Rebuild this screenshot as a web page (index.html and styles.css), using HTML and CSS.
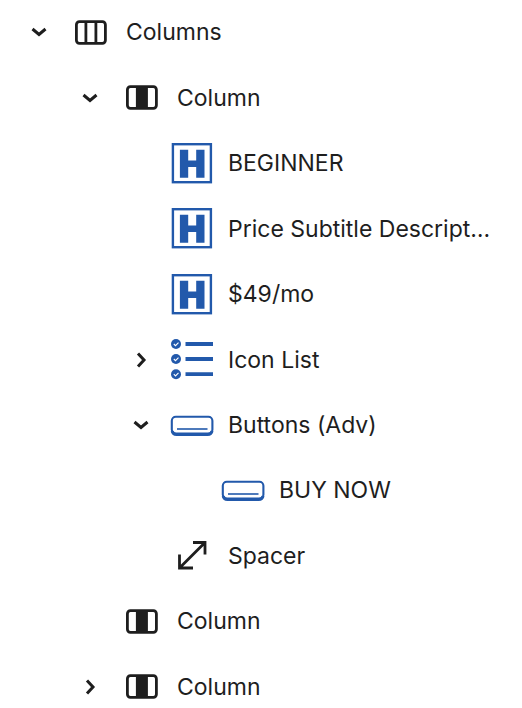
FILE: index.html
```html
<!DOCTYPE html>
<html lang="en">
<head>
<meta charset="utf-8">
<title>List view</title>
<link rel="stylesheet" href="styles.css">
</head>
<body>
<svg class="defs" width="0" height="0" aria-hidden="true">
  <defs>
    <symbol id="chev-down" viewBox="0 0 24 24"><path class="chev" d="M5.500 9l6.500 5.500L18.500 9"/></symbol>
    <symbol id="chev-right" viewBox="0 0 24 24"><path class="chev" d="M9 5.500l6 6.500-6 6.500"/></symbol>
    <symbol id="i-columns" viewBox="0 0 47 47">
      <rect class="dark-line" x="10.400" y="12.700" width="29" height="21.600" rx="3"/>
      <path class="dark-line" d="M19.900 12.700v21.600M29.900 12.700v21.600"/>
    </symbol>
    <symbol id="i-column" viewBox="0 0 47 47">
      <rect class="dark-line" x="10.400" y="12.700" width="29" height="21.600" rx="3"/>
      <rect class="dark-fill" x="18.900" y="12.700" width="12" height="21.600"/>
    </symbol>
    <symbol id="i-heading" viewBox="0 0 47 47">
      <rect class="blue-line" x="4.900" y="4.200" width="38" height="38"/>
      <path class="blue-fill" d="M11.900 9.700h8.300v10.800h8v-10.800h8.300v28h-8.300v-10.800h-8v10.800h-8.300z"/>
    </symbol>
    <symbol id="i-list" viewBox="0 0 47 47">
      <circle class="blue-fill" cx="8" cy="8" r="5"/>
      <circle class="blue-fill" cx="8" cy="23" r="5"/>
      <circle class="blue-fill" cx="8" cy="38.200" r="5"/>
      <path class="check" d="M5.800 8l1.700 1.700 3-3M5.800 23l1.700 1.700 3-3M5.800 38.200l1.700 1.700 3-3"/>
      <path class="bar" d="M17.500 8h27.500M17.500 23h27.500M17.500 38.200h27.500"/>
    </symbol>
    <symbol id="i-button" viewBox="0 0 47 47">
      <rect class="btn-frame" x="3.800" y="14.800" width="40.600" height="16.700" rx="4"/>
      <path class="btn-base" d="M4.200 29c.5 3 2.300 3.500 4.300 3.500h31.200c2 0 3.800-.5 4.300-3.500"/>
      <path class="btn-line" d="M9 27h30.500"/>
    </symbol>
    <symbol id="i-spacer" viewBox="0 0 47 47">
      <path class="dark-line" d="M12 35.500L36.500 11M25 10.500h12v12M11.500 22.500v13.500h13.500"/>
    </symbol>
  </defs>
</svg>
<ul class="tree">
  <li class="row level-0">
    <svg class="toggle"><use href="#chev-down"/></svg>
    <svg class="icon"><use href="#i-columns"/></svg>
    <span class="label">Columns</span>
  </li>
  <li class="row level-1">
    <svg class="toggle"><use href="#chev-down"/></svg>
    <svg class="icon"><use href="#i-column"/></svg>
    <span class="label">Column</span>
  </li>
  <li class="row level-2">
    <span class="toggle"></span>
    <svg class="icon"><use href="#i-heading"/></svg>
    <span class="label">BEGINNER</span>
  </li>
  <li class="row level-2">
    <span class="toggle"></span>
    <svg class="icon"><use href="#i-heading"/></svg>
    <span class="label">Price Subtitle Descript…</span>
  </li>
  <li class="row level-2">
    <span class="toggle"></span>
    <svg class="icon"><use href="#i-heading"/></svg>
    <span class="label">$49/mo</span>
  </li>
  <li class="row level-2">
    <svg class="toggle"><use href="#chev-right"/></svg>
    <svg class="icon"><use href="#i-list"/></svg>
    <span class="label">Icon List</span>
  </li>
  <li class="row level-2">
    <svg class="toggle"><use href="#chev-down"/></svg>
    <svg class="icon"><use href="#i-button"/></svg>
    <span class="label">Buttons (Adv)</span>
  </li>
  <li class="row level-3">
    <span class="toggle"></span>
    <svg class="icon"><use href="#i-button"/></svg>
    <span class="label">BUY NOW</span>
  </li>
  <li class="row level-2">
    <span class="toggle"></span>
    <svg class="icon"><use href="#i-spacer"/></svg>
    <span class="label">Spacer</span>
  </li>
  <li class="row level-1">
    <span class="toggle"></span>
    <svg class="icon"><use href="#i-column"/></svg>
    <span class="label">Column</span>
  </li>
  <li class="row level-1">
    <svg class="toggle"><use href="#chev-right"/></svg>
    <svg class="icon"><use href="#i-column"/></svg>
    <span class="label">Column</span>
  </li>
</ul>
</body>
</html>
```
FILE: styles.css
```css
html, body {
  margin: 0;
  height: 708px;
  overflow: hidden;
  background: #fff;
}
.defs {
  position: absolute;
}
.tree {
  list-style: none;
  margin: -0.35px 0 0;
  padding: 0;
  font-family: Inter, "Liberation Sans", sans-serif;
  font-size: 23px;
  color: #1e1e1e;
}
.row {
  display: flex;
  align-items: center;
  height: 65.45px;
}
.level-0 { padding-left: 27px; }
.level-1 { padding-left: 78px; }
.level-2 { padding-left: 129px; }
.level-3 { padding-left: 180px; }
.toggle {
  flex: none;
  width: 24px;
  height: 24px;
  margin-right: 15px;
}
.icon {
  flex: none;
  width: 47px;
  height: 47px;
  margin-right: 13px;
}
.label {
  white-space: nowrap;
}
.chev {
  fill: none;
  stroke: #1e1e1e;
  stroke-width: 3;
}
.dark-line {
  fill: none;
  stroke: #1e1e1e;
  stroke-width: 2.800;
}
.dark-fill { fill: #1e1e1e; }
.blue-line {
  fill: none;
  stroke: #2259ab;
  stroke-width: 2.4;
}
.blue-fill { fill: #2259ab; }
.check {
  fill: none;
  stroke: #fff;
  stroke-width: 1.100;
}
.bar {
  fill: none;
  stroke: #2259ab;
  stroke-width: 3.800;
}
.btn-frame {
  fill: none;
  stroke: #2259ab;
  stroke-width: 2.100;
}
.btn-base {
  fill: none;
  stroke: #2259ab;
  stroke-width: 3;
}
.btn-line {
  fill: none;
  stroke: #2259ab;
  stroke-width: 1.600;
}
```
